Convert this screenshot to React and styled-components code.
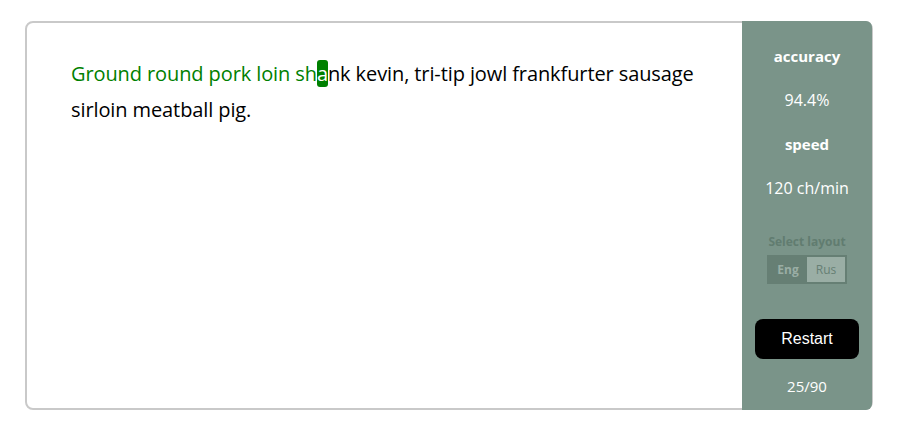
import React from 'react'
import styled, { createGlobalStyle } from 'styled-components'

const GlobalStyle = createGlobalStyle`
body {
  margin: 0;
  background: #fff;
  font-family: "Open Sans", "Noto Sans", sans-serif;
}
`

const Page = styled.div`
padding: 21px 27px 0 25px;
`

const Card = styled.div`
display: flex;
height: 389px;
border: 2px solid #c9c9c9;
border-radius: 8px;
box-sizing: border-box;
`

const TextArea = styled.div`
flex: 1;
padding: 33px 44px;
font-size: 20px;
line-height: 36px;
color: #000;
letter-spacing: -0.1px;
`

const Done = styled.span`
color: #008000;
`

const Cursor = styled.span`
background: #008000;
color: #fff;
border-radius: 3px;
padding: 0;
`

const Sidebar = styled.div`
width: 130px;
margin: -2px -1px -2px 0;
background: #7a9489;
border-radius: 0 6px 6px 0;
display: flex;
flex-direction: column;
align-items: center;
color: #fff;
padding-top: 24px;
box-sizing: border-box;
`

const Label = styled.div`
font-weight: 700;
font-size: 15px;
line-height: 22px;
`

const Value = styled.div`
font-size: 16px;
line-height: 22px;
margin: 22px 0;
`

const LayoutLabel = styled.div`
margin-top: 12px;
font-size: 12px;
font-weight: 700;
color: #617c70;
`

const Toggle = styled.div`
display: flex;
margin-top: 5px;
border: 2px solid #667f74;
`

const Option = styled.div`
width: 38px;
height: 25px;
display: flex;
align-items: center;
justify-content: center;
font-size: 12px;
font-weight: ${p => (p.active ? 700 : 400)};
background: ${p => (p.active ? '#667f74' : '#9aaea5')};
color: ${p => (p.active ? '#9aaea5' : '#667f74')};
`

const Restart = styled.button`
margin-top: 35px;
width: 104px;
height: 40px;
border: none;
border-radius: 8px;
background: #000;
color: #fff;
font-family: "Liberation Sans", Arial, sans-serif;
font-size: 16px;
`

const Counter = styled.div`
margin-top: 17px;
font-size: 15px;
`

export default function App() {
  return (
    <Page>
      <GlobalStyle />
      <Card>
        <TextArea>
          <Done>Ground round pork loin sh</Done>
          <Cursor>a</Cursor>
          nk kevin, tri-tip jowl frankfurter sausage sirloin meatball pig.
        </TextArea>
        <Sidebar>
          <Label>accuracy</Label>
          <Value>94.4%</Value>
          <Label>speed</Label>
          <Value>120 ch/min</Value>
          <LayoutLabel>Select layout</LayoutLabel>
          <Toggle>
            <Option active>Eng</Option>
            <Option>Rus</Option>
          </Toggle>
          <Restart>Restart</Restart>
          <Counter>25/90</Counter>
        </Sidebar>
      </Card>
    </Page>
  )
}
